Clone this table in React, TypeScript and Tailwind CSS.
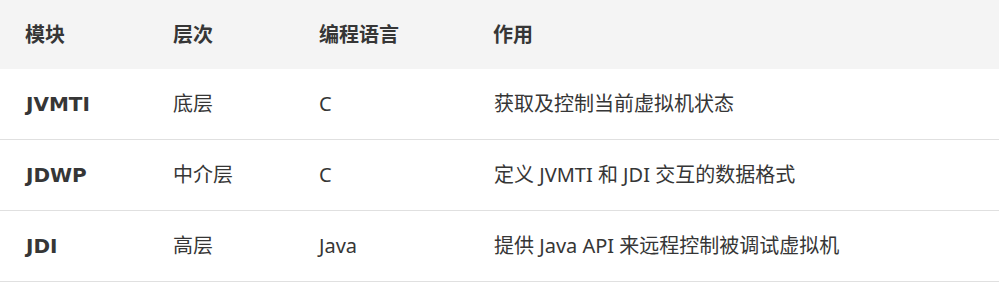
import React from "react";

const rows = [
  { m: "JVMTI", l: "底层", lang: "C", d: "获取及控制当前虚拟机状态" },
  { m: "JDWP", l: "中介层", lang: "C", d: "定义 JVMTI 和 JDI 交互的数据格式" },
  { m: "JDI", l: "高层", lang: "Java", d: "提供 Java API 来远程控制被调试虚拟机" },
];

export default function App() {
  return (
    <div
      className="w-[999px] h-[283px] bg-white text-[#363636] text-[20px] leading-none"
      style={{ fontFamily: '"Noto Sans", "Noto Sans CJK SC", sans-serif' }}
    >
      <div className="grid grid-cols-[148px_146px_174px_1fr] h-[69px] items-center bg-[#f4f4f4] font-semibold pl-[25px]">
        <div>模块</div>
        <div>层次</div>
        <div>编程语言</div>
        <div>作用</div>
      </div>
      {rows.map((r) => (
        <div
          key={r.m}
          className="grid grid-cols-[148px_146px_174px_1fr] h-[71px] items-center border-b border-[#e0e0e0] pl-[25px]"
        >
          <div className="font-bold font-['DejaVu_Sans',sans-serif] pl-px">{r.m}</div>
          <div>{r.l}</div>
          <div>{r.lang}</div>
          <div className="pl-px">{r.d}</div>
        </div>
      ))}
    </div>
  );
}
